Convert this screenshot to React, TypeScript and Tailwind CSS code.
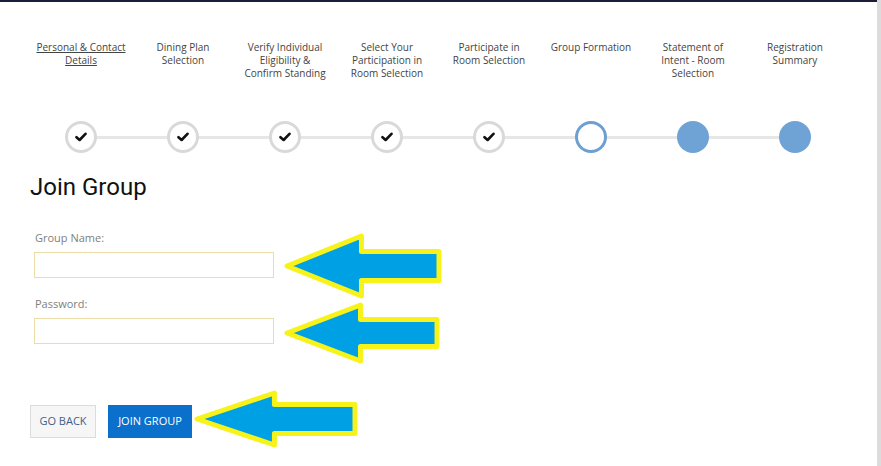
import React from "react";

type Step = { label: string[]; state: "done" | "current" | "todo"; link?: boolean };

const steps: Step[] = [
  { label: ["Personal & Contact", "Details"], state: "done", link: true },
  { label: ["Dining Plan", "Selection"], state: "done" },
  { label: ["Verify Individual", "Eligibility &", "Confirm Standing"], state: "done" },
  { label: ["Select Your", "Participation in", "Room Selection"], state: "done" },
  { label: ["Participate in", "Room Selection"], state: "done" },
  { label: ["Group Formation"], state: "current" },
  { label: ["Statement of", "Intent - Room", "Selection"], state: "todo" },
  { label: ["Registration", "Summary"], state: "todo" },
];

function Check() {
  return (
    <svg width="12" height="10" viewBox="0 0 12 10">
      <path d="M1.5 5.2 L4.6 8 L10.5 1.8" fill="none" stroke="#111" strokeWidth="2.6" strokeLinecap="round" strokeLinejoin="round" />
    </svg>
  );
}

function StepDot({ state }: { state: Step["state"] }) {
  if (state === "done")
    return (
      <div className="w-[32px] h-[32px] rounded-full border-[3px] border-[#d9d9d9] bg-white flex items-center justify-center">
        <Check />
      </div>
    );
  if (state === "current")
    return <div className="w-[32px] h-[32px] rounded-full border-[3px] border-[#6d9fd2] bg-white" />;
  return <div className="w-[32px] h-[32px] rounded-full bg-[#6fa3d6]" />;
}

// yellow outlined annotation arrow pointing left
function Arrow({ w, h, shaft }: { w: number; h: number; shaft: number }) {
  const head = w * 0.49;
  const mid = h / 2;
  const s0 = mid - shaft / 2;
  const s1 = mid + shaft / 2;
  return (
    <svg width={w + 8} height={h + 8} viewBox={`-4 -4 ${w + 8} ${h + 8}`}>
      <polygon
        points={`0,${mid} ${head},0 ${head},${s0} ${w},${s0} ${w},${s1} ${head},${s1} ${head},${h}`}
        fill="#00a0e4"
        stroke="#f7f31a"
        strokeWidth="5"
        strokeLinejoin="round"
      />
    </svg>
  );
}

export default function App() {
  return (
    <div className="relative w-[881px] h-[466px] bg-white overflow-hidden flex" style={{ fontFamily: '"Open Sans", Arial, sans-serif' }}>
      <div className="flex-1 flex flex-col">
        <div className="h-[2px] bg-[#1b1b3a]" />
        <div className="px-[30px]">
          {/* progress tracker */}
          <div className="relative pt-[39px]">
            <div className="grid grid-cols-[repeat(8,102px)]">
              {steps.map((s, i) => (
                <div key={i} className="h-[80px] text-center text-[10px] leading-[13px] text-[#444]">
                  {s.label.map((l, j) => (
                    <div key={j} className={s.link ? "underline" : ""}>
                      {l}
                    </div>
                  ))}
                </div>
              ))}
            </div>
            <div className="relative grid grid-cols-[repeat(8,102px)]">
              <div className="absolute left-[51px] right-[51px] top-[15px] h-[3px] bg-[#e6e6e6]" />
              {steps.map((s, i) => (
                <div key={i} className="relative flex justify-center">
                  <StepDot state={s.state} />
                </div>
              ))}
            </div>
          </div>

          <h1 className="mt-[20px] text-[24px] leading-[28px] text-[#111]" style={{ fontFamily: "Roboto, Arial, sans-serif" }}>
            Join Group
          </h1>

          <div className="pl-[4px] mt-[29px]">
            <div className="text-[11px] leading-[16px] text-[#808080] pl-[1px]">Group Name:</div>
            <input className="mt-[6px] block w-[240px] h-[26px] border border-[#ecdca8] outline-none" />
            <div className="mt-[18px] text-[11px] leading-[16px] text-[#808080] pl-[1px]">Password:</div>
            <input type="password" className="mt-[6px] block w-[240px] h-[26px] border border-[#ecdca8] outline-none" />
          </div>

          <div className="mt-[61px] flex gap-[12px]">
            <button className="w-[66px] h-[33px] bg-[#f6f6f6] border border-[#dcdcdc] text-[11px] text-[#3f5f88] uppercase">
              Go Back
            </button>
            <button className="w-[84px] h-[33px] bg-[#0b6fcc] text-[11px] text-white uppercase">Join Group</button>
          </div>
        </div>
      </div>
      <div className="w-[4px] bg-[#dcdcdc]" />

      {/* annotation arrows */}
      <div className="absolute left-[283px] top-[232px]">
        <Arrow w={152} h={60} shaft={29} />
      </div>
      <div className="absolute left-[283px] top-[301px]">
        <Arrow w={150} h={56} shaft={27} />
      </div>
      <div className="absolute left-[193px] top-[389px]">
        <Arrow w={158} h={52} shaft={29} />
      </div>
    </div>
  );
}
